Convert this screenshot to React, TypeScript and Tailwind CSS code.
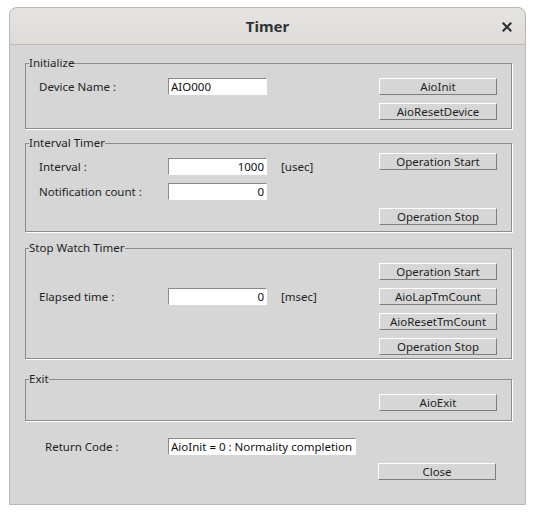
import type { ReactNode } from "react";

const font = { fontFamily: '"Noto Sans", "Open Sans", sans-serif' };

function Btn({ label }: { label: string }) {
  return (
    <button
      type="button"
      className="h-[17px] w-[118px] border border-t-white border-l-white border-b-[#7f7f7f] border-r-[#7f7f7f] bg-[#d6d6d6] text-[11.5px] leading-[14px] text-[#1e1e1e]"
    >
      {label}
    </button>
  );
}

function Field({ value, right, wide }: { value: string; right?: boolean; wide?: boolean }) {
  return (
    <input
      readOnly
      value={value}
      className={`h-[17px] border border-t-[#8a8a8a] border-l-[#8a8a8a] border-b-white border-r-white bg-white px-[2px] text-[11.5px] leading-[14px] text-[#111] outline-none ${right ? "text-right" : "text-left"} ${wide ? "w-[188px]" : "w-[99px]"}`}
    />
  );
}

function Group({ title, children, className }: { title: string; children: ReactNode; className?: string }) {
  return (
    <fieldset
      className={`mx-[15px] w-[487px] border border-[#8c8c8c] pl-[13px] pr-[14px] shadow-[1px_1px_0_#fff] ${className ?? ""}`}
    >
      <legend className="-ml-[10px] h-[16px] text-[11.5px] leading-[16px] text-[#1e1e1e]">{title}</legend>
      {children}
    </fieldset>
  );
}

function Row({ label, children }: { label: string; children: ReactNode }) {
  return (
    <div className="flex h-[17px] items-center">
      <span className="w-[129px] text-[11.5px] leading-[14px] text-[#1e1e1e]">{label}</span>
      {children}
    </div>
  );
}

export default function App() {
  return (
    <div className="h-[515px] w-[535px] bg-white pl-[9px] pt-[7px]" style={font}>
      <div className="flex h-[498px] w-[517px] flex-col rounded-t-[8px] border border-[#b8b8b8] bg-[#d6d6d6]">
        <div className="relative flex h-[37px] shrink-0 items-center justify-center rounded-t-[8px] border-b border-[#bfbcb7] bg-gradient-to-b from-[#e6e4e1] to-[#dedbd7]">
          <span className="text-[15px] font-bold text-[#2e3436]">Timer</span>
          <svg className="absolute right-[13px] top-[14px]" width="10" height="10" viewBox="0 0 10 10">
            <path d="M1.5 1.5 L8.5 8.5 M8.5 1.5 L1.5 8.5" stroke="#2e3436" strokeWidth="2.2" strokeLinecap="square" />
          </svg>
        </div>

        <Group title="Initialize" className="mt-[10px] h-[74px]">
          <div className="flex pt-[7px]">
            <div className="flex-1">
              <Row label="Device Name :">
                <Field value="AIO000" />
              </Row>
            </div>
            <div className="flex flex-col gap-[8px]">
              <Btn label="AioInit" />
              <Btn label="AioResetDevice" />
            </div>
          </div>
        </Group>

        <Group title="Interval Timer" className="mt-[6px] h-[97px]">
          <div className="flex pt-[2px]">
            <div className="flex flex-1 flex-col gap-[8px] pt-[5px]">
              <Row label="Interval :">
                <Field value="1000" right />
                <span className="ml-[14px] text-[11.5px] text-[#1e1e1e]">[usec]</span>
              </Row>
              <Row label="Notification count :">
                <Field value="0" right />
              </Row>
            </div>
            <div className="flex h-[72px] flex-col justify-between">
              <Btn label="Operation Start" />
              <Btn label="Operation Stop" />
            </div>
          </div>
        </Group>

        <Group title="Stop Watch Timer" className="mt-[8px] h-[119px]">
          <div className="flex pt-[7px]">
            <div className="flex-1 pt-[25px]">
              <Row label="Elapsed time :">
                <Field value="0" right />
                <span className="ml-[14px] text-[11.5px] text-[#1e1e1e]">[msec]</span>
              </Row>
            </div>
            <div className="flex flex-col gap-[8px]">
              <Btn label="Operation Start" />
              <Btn label="AioLapTmCount" />
              <Btn label="AioResetTmCount" />
              <Btn label="Operation Stop" />
            </div>
          </div>
        </Group>

        <Group title="Exit" className="mt-[12px] h-[50px]">
          <div className="flex justify-end pt-[7px]">
            <Btn label="AioExit" />
          </div>
        </Group>

        <div className="ml-[35px] mt-[17px] flex h-[17px] items-center">
          <span className="w-[123px] text-[11.5px] leading-[14px] text-[#1e1e1e]">Return Code :</span>
          <Field value="AioInit = 0 : Normality completion" wide />
        </div>
        <div className="mt-[8px] flex justify-end pr-[29px]">
          <Btn label="Close" />
        </div>
      </div>
    </div>
  );
}
